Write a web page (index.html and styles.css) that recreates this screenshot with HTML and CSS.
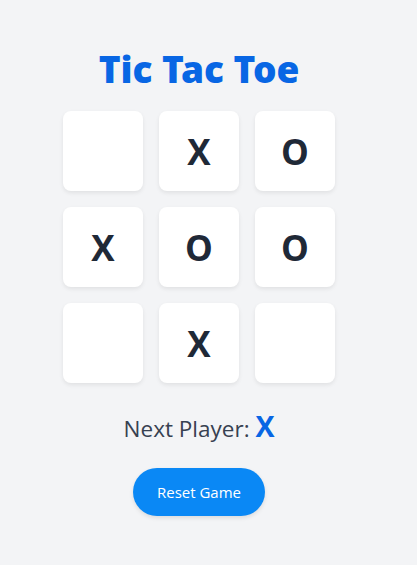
FILE: index.html
```html
<!DOCTYPE html>
<html>
<head>
<meta charset="utf-8">
<link rel="stylesheet" href="styles.css">
</head>
<body>
<div class="app">
  <h1 class="title">Tic Tac Toe</h1>
  <div class="board">
    <div class="cell"></div>
    <div class="cell">X</div>
    <div class="cell">O</div>
    <div class="cell">X</div>
    <div class="cell">O</div>
    <div class="cell">O</div>
    <div class="cell"></div>
    <div class="cell">X</div>
    <div class="cell"></div>
  </div>
  <div class="status">Next Player: <span class="player">X</span></div>
  <button class="reset">Reset Game</button>
</div>
</body>
</html>
```
FILE: styles.css
```css
html, body {
  margin: 0;
  padding: 0;
  background: #f3f4f6;
}
body {
  font-family: "Open Sans", "Noto Sans", sans-serif;
  height: 565px;
}
.app {
  width: 398px;
  display: flex;
  flex-direction: column;
  align-items: center;
  padding-top: 47px;
}
.title {
  margin: 0 0 20px;
  font-family: "Noto Sans", sans-serif;
  font-weight: 900;
  font-size: 37px;
  line-height: 44px;
  color: #0866e4;
}
.board {
  display: grid;
  grid-template-columns: repeat(3, 80px);
  grid-auto-rows: 80px;
  gap: 16px;
}
.cell {
  background: #fff;
  border-radius: 8px;
  box-shadow: 0 2px 4px rgba(0,0,0,0.08);
  display: flex;
  align-items: center;
  justify-content: center;
  font-family: "Open Sans", sans-serif;
  font-weight: 700;
  font-size: 35px;
  color: #1f2937;
}
.status {
  margin-top: 27px;
  font-size: 22.5px;
  line-height: 32px;
  color: #374151;
}
.player {
  font-weight: 700;
  font-size: 28.5px;
  color: #0866e4;
}
.reset {
  margin-top: 23px;
  width: 132px;
  height: 48px;
  border: none;
  border-radius: 24px;
  background: #0a88f5;
  color: #fff;
  font-family: "Open Sans", sans-serif;
  font-size: 15px;
  box-shadow: 0 2px 4px rgba(0,0,0,0.1);
}
```
